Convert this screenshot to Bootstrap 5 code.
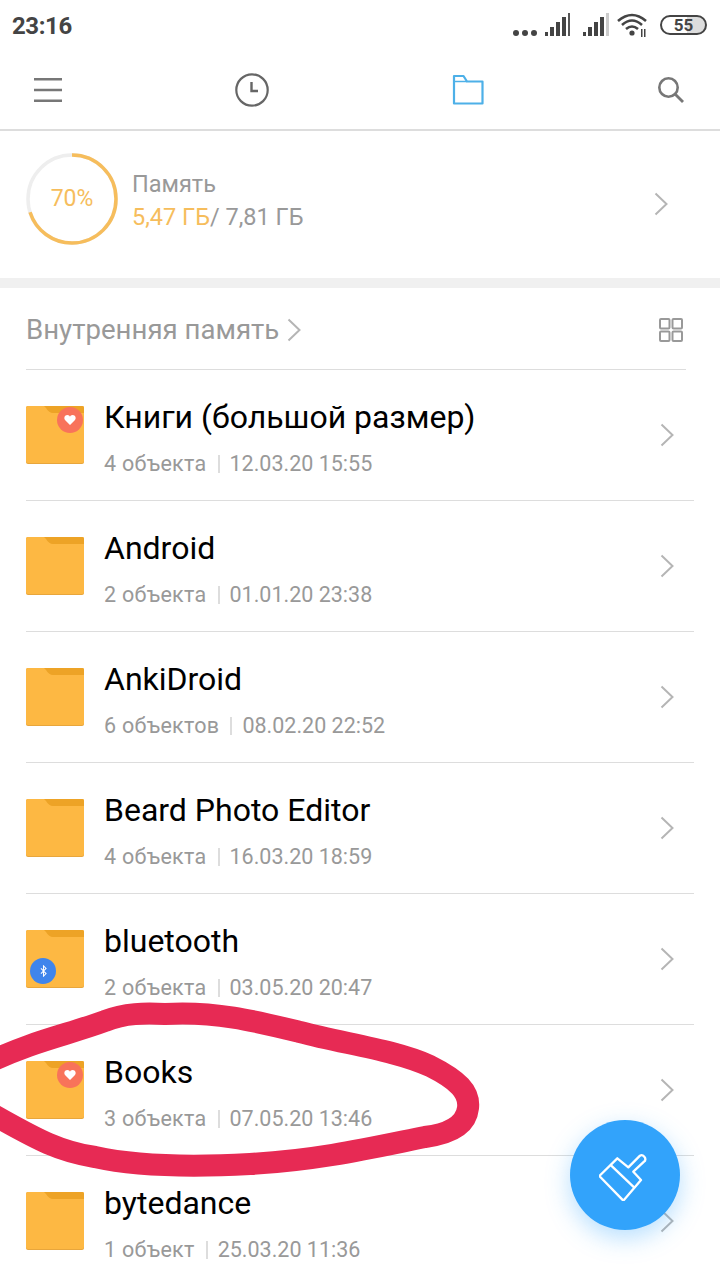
<!DOCTYPE html>
<html lang="ru">
<head>
  <meta charset="UTF-8">
  <meta name="viewport" content="width=device-width, initial-scale=1.0">
  <title>Проводник</title>
  <link href="https://cdn.jsdelivr.net/npm/bootstrap@5.3.2/dist/css/bootstrap.min.css" rel="stylesheet">
  <style>
    html, body { width: 720px; height: 1280px; overflow: hidden; background: #fff; }
    body { font-family: Roboto, "Liberation Sans", sans-serif; position: relative; }
    .status-bar { height: 50px; padding: 2px 13px 0 12px; }
    .status-icons { margin-bottom: 2px; }
    .status-time { font-size: 24px; font-weight: 700; color: #444; letter-spacing: -.4px; }
    .batt { width: 47px; height: 20px; border: 2px solid #444; border-radius: 10px; font-size: 17px; font-weight: 700; color: #444; line-height: 16px; text-align: center; background: linear-gradient(90deg, #fff 58%, #ddd 58%); }
    .tool-bar { height: 81px; padding-left: 34px; border-bottom: 2px solid #ddd; }
    .ml-clock { margin-left: 173px; }
    .ml-folder { margin-left: 183px; }
    .ml-search { margin-left: 174px; }
    .storage { height: 141px; padding: 0 52px 6px 26px; border-bottom: 10px solid #f0f0f0; box-sizing: content-box; }
    .storage-ring { position: relative; width: 92px; height: 92px; margin: 0 14px 5px 0; }
    .storage-pct { position: absolute; inset: 0; display: flex; align-items: center; justify-content: center; font-size: 23px; color: #f6bd5c; }
    .storage-text { margin-bottom: 2px; }
    .storage-name { font-size: 23.5px; color: #999; line-height: 32px; }
    .storage-size { font-size: 23.5px; color: #999; line-height: 34px; }
    .storage-used { color: #f6bd5c; }
    .storage-chev { margin-top: 4px; }
    .path-head { height: 82px; margin: 0 34px 0 26px; padding-top: 2px; border-bottom: 1px solid #ddd; }
    .path-name { font-size: 27.6px; color: #999; margin-right: 8px; }
    .grid-toggle { margin-right: 3px; }
    .file-row { height: 131px; margin: 0 26px; border-bottom: 1px solid #ddd; position: relative; }
    .file-icon { position: relative; width: 58px; height: 58px; margin-right: 20px; flex: none; }
    .file-badge { position: absolute; width: 26px; height: 26px; border-radius: 50%; display: flex; align-items: center; justify-content: center; }
    .badge-heart { left: 31px; top: 1px; background: #f8735a; }
    .badge-bt { left: 4px; top: 28px; background: #3f85ec; }
    .file-text { padding-top: 5px; }
    .file-title { font-size: 32px; color: #000; line-height: 40px; }
    .file-meta { font-size: 21.5px; color: #999; line-height: 28px; margin-top: 13px; }
    .file-count { letter-spacing: .3px; }
    .file-sep { display: inline-block; width: 2px; height: 18px; background: #ddd; margin: 0 10px 0 11px; vertical-align: -2px; }
    .file-chev { margin-left: auto; margin-right: 20px; }
    .fab { position: absolute; left: 570px; top: 1120px; width: 110px; height: 110px; border-radius: 50%; background: #32a3fb; box-shadow: 0 8px 24px rgba(50,163,251,.35); display: flex; align-items: center; justify-content: center; }
    .scribble { position: absolute; left: 0; top: 0; pointer-events: none; }
  </style>
</head>
<body>
  <svg width="0" height="0" class="d-block">
    <symbol id="chev" viewBox="0 0 14 24"><path d="M1.5 1.5 12.5 12 1.5 22.500" fill="none" stroke="#b5b5b5" stroke-width="2"/></symbol>
    <symbol id="folder" viewBox="0 0 58 58">
      <rect width="58" height="58" rx="2" fill="#e8a63c"/>
      <rect width="58" height="57" rx="2" fill="#fdb843"/>
      <path d="M18 0H56a2 2 0 0 1 2 2V7H27Q23 7 20 2Z" fill="#eda326"/>
    </symbol>
  </svg>

  <div class="status-bar d-flex align-items-center justify-content-between">
    <span class="status-time">23:16</span>
    <div class="status-icons d-flex align-items-center">
      <svg width="140" height="26" viewBox="0 0 140 26" class="me-2">
        <g fill="#444"><circle cx="4" cy="21" r="3"/><circle cx="13" cy="21" r="3"/><circle cx="22" cy="21" r="3"/>
          <rect x="33" y="20" width="3" height="4"/><rect x="38" y="15" width="4" height="9"/><rect x="44" y="10" width="4" height="14"/><rect x="50" y="5" width="4" height="19"/><rect x="56" y="1" width="2" height="23" opacity=".9"/>
          <rect x="71" y="20" width="3" height="4"/><rect x="76" y="15" width="4" height="9"/><rect x="82" y="10" width="4" height="14"/><rect x="88" y="5" width="4" height="19"/><rect x="94" y="1" width="3" height="23" fill="#ccc"/>
          <circle cx="120" cy="21" r="2.600"/><rect x="129" y="17" width="1.500" height="8"/><rect x="132" y="17" width="1.500" height="8"/></g>
        <g fill="none" stroke="#444" stroke-width="2.600"><path d="M106 9Q120 -3 134 9"/><path d="M110 13Q120 4 130 13"/><path d="M114 17Q120 12 126 17"/></g>
      </svg>
      <div class="batt">55</div>
    </div>
  </div>

  <div class="tool-bar d-flex align-items-center">
    <svg width="28" height="26" viewBox="0 0 28 26"><path d="M0 2.200H28M0 13H28M0 23.800H28" stroke="#777" stroke-width="2.600"/></svg>
    <svg class="ml-clock" width="34" height="34" viewBox="0 0 34 34"><circle cx="17" cy="17" r="15.700" fill="none" stroke="#666" stroke-width="2.200"/><path d="M16.500 9V18H23" fill="none" stroke="#666" stroke-width="2.400"/></svg>
    <svg class="ml-folder" width="32" height="32" viewBox="0 0 32 32"><path d="M2 29.500V2H11.500L15 7.500H30.500V29.500Z" fill="none" stroke="#4db0e8" stroke-width="2.200" stroke-linejoin="round"/><path d="M2 7.500H15" stroke="#4db0e8" stroke-width="1.500"/></svg>
    <svg class="ml-search" width="26" height="26" viewBox="0 0 26 26"><circle cx="10.500" cy="10.500" r="9.200" fill="none" stroke="#777" stroke-width="2.600"/><path d="M17 17 25 25" stroke="#777" stroke-width="2.800"/></svg>
  </div>

  <div class="storage d-flex align-items-center">
    <div class="storage-ring">
      <svg width="92" height="92" viewBox="0 0 92 92">
        <circle cx="46" cy="46" r="44" fill="none" stroke="#eee" stroke-width="3.500"/>
        <circle cx="46" cy="46" r="44" fill="none" stroke="#f6bd5c" stroke-width="3.500" stroke-dasharray="193.500 276.500" transform="rotate(-90 46 46)"/>
      </svg>
      <div class="storage-pct">70%</div>
    </div>
    <div class="storage-text">
      <div class="storage-name">Память</div>
      <div class="storage-size"><span class="storage-used">5,47 ГБ</span>/ 7,81 ГБ</div>
    </div>
    <svg class="storage-chev ms-auto" width="14" height="24"><use href="#chev"/></svg>
  </div>

  <div class="path-head d-flex align-items-center">
    <span class="path-name">Внутренняя память</span>
    <svg width="14" height="24"><use href="#chev"/></svg>
    <svg class="grid-toggle ms-auto" width="24" height="24" viewBox="0 0 24 24"><g fill="none" stroke="#999" stroke-width="2"><rect x="1" y="1" width="9.500" height="9.500" rx="1"/><rect x="13.500" y="1" width="9.500" height="9.500" rx="1"/><rect x="1" y="13.500" width="9.500" height="9.500" rx="1"/><rect x="13.500" y="13.500" width="9.500" height="9.500" rx="1"/></g></svg>
  </div>

  <div id="fileList"></div>

  <svg class="scribble" width="720" height="1280" viewBox="0 0 720 1280">
    <path d="M-10 1062C30 1042 70 1034 105 1021C125 1013 145 1013 165 1014C215 1011 255 1021 300 1032C345 1044 395 1050 430 1066C458 1080 470 1092 468 1108C466 1126 448 1134 425 1137C375 1147 320 1160 250 1164C195 1167 140 1167 95 1157C55 1151 30 1135 -10 1113" fill="none" stroke="#e72a54" stroke-width="22" stroke-linecap="round" stroke-linejoin="round"/>
  </svg>

  <div class="fab">
    <svg width="52" height="52" viewBox="177 177 156 156"><g fill="none" stroke="#fff" stroke-width="7" stroke-linejoin="round"><path d="M178 258 232 205 265 232 300 197Q308 192 315 203 318 212 312 215L280 245 303 270 250 332Z"/><path d="M213 226 283 293"/></g></svg>
  </div>

  <script>
    const archivos = [
      { nombre: "Книги (большой размер)", info: "4 объекта", fecha: "12.03.20 15:55", badge: "heart" },
      { nombre: "Android", info: "2 объекта", fecha: "01.01.20 23:38" },
      { nombre: "AnkiDroid", info: "6 объектов", fecha: "08.02.20 22:52" },
      { nombre: "Beard Photo Editor", info: "4 объекта", fecha: "16.03.20 18:59" },
      { nombre: "bluetooth", info: "2 объекта", fecha: "03.05.20 20:47", badge: "bt" },
      { nombre: "Books", info: "3 объекта", fecha: "07.05.20 13:46", badge: "heart" },
      { nombre: "bytedance", info: "1 объект", fecha: "25.03.20 11:36" }
    ];

    const badges = {
      heart: `<div class="file-badge badge-heart"><svg width="12" height="10" viewBox="0 0 14 12"><path d="M7 12 1 6C-1 3 1 0 4 0 5.500 0 6.500 1 7 2 7.500 1 8.500 0 10 0 13 0 15 3 13 6Z" fill="#fff"/></svg></div>`,
      bt: `<div class="file-badge badge-bt"><svg width="7" height="12" viewBox="0 0 8 14"><path d="M1 4 7 10 4 13V1L7 4 1 10" fill="none" stroke="#fff" stroke-width="1.200"/></svg></div>`
    };

    document.getElementById("fileList").innerHTML = archivos.map(a => `
      <div class="file-row d-flex align-items-center">
        <div class="file-icon"><svg width="58" height="58" class="d-block"><use href="#folder"/></svg>${a.badge ? badges[a.badge] : ""}</div>
        <div class="file-text">
          <div class="file-title">${a.nombre}</div>
          <div class="file-meta"><span class="file-count">${a.info}</span><span class="file-sep"></span>${a.fecha}</div>
        </div>
        <svg class="file-chev" width="14" height="24"><use href="#chev"/></svg>
      </div>`).join("");
  </script>
  <script src="https://cdn.jsdelivr.net/npm/bootstrap@5.3.2/dist/js/bootstrap.bundle.min.js"></script>
</body>
</html>
